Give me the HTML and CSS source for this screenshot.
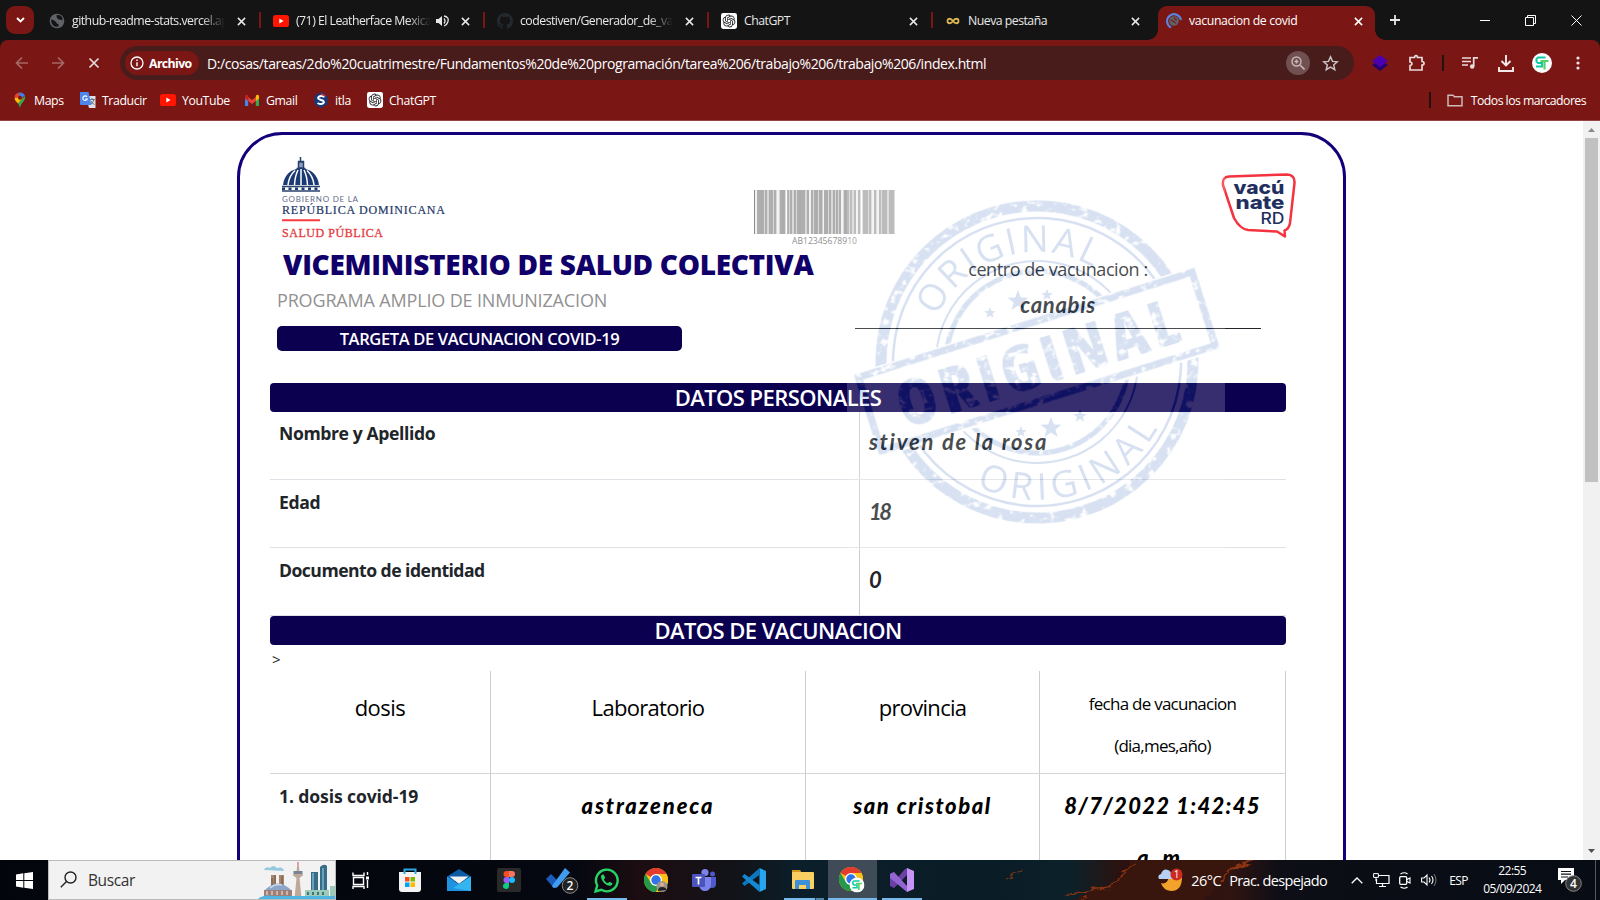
FILE: index.html
```html
<!DOCTYPE html>
<html lang="es">
<head>
<meta charset="utf-8">
<title>vacunacion de covid</title>
<link rel="stylesheet" href="styles.css">
</head>
<body>
<svg class="defs" width="0" height="0">
  <symbol id="x" viewBox="0 0 10 10"><path d="M1 1l8 8M9 1l-8 8" stroke="currentColor" stroke-width="1.7" fill="none"/></symbol>
  <symbol id="globe" viewBox="0 0 16 16"><circle cx="8" cy="8" r="7.3" fill="#5f6368"/><path d="M2 6.500c2 0 3.500 1 4.500 2s1 2.500 3 2.500v2.500c-4 1.500-7.500-2-7.500-7zM7 2.500c1.500 2 .5 3 3 4 1.500.5 2.500 0 3.500 1 .5-2.500-1-5-3.500-5.500z" fill="#141414"/></symbol>
  <symbol id="yt" viewBox="0 0 16 12"><rect width="16" height="12" rx="2.600" fill="#ff1500"/><path d="M6.300 3.500v5l4.300-2.500z" fill="#fff"/></symbol>
  <symbol id="gpt" viewBox="-3 -3 30 30"><rect x="-3" y="-3" width="30" height="30" rx="4" fill="#fff"/><path fill="#222" d="M22.2819 9.8211a5.9847 5.9847 0 0 0-.5157-4.9108 6.0462 6.0462 0 0 0-6.5098-2.9A6.0651 6.0651 0 0 0 4.9807 4.1818a5.9847 5.9847 0 0 0-3.9977 2.9 6.0462 6.0462 0 0 0 .7427 7.0966 5.98 5.98 0 0 0 .511 4.9107 6.051 6.051 0 0 0 6.5146 2.9001A5.9847 5.9847 0 0 0 13.2599 24a6.0557 6.0557 0 0 0 5.7718-4.2058 5.9894 5.9894 0 0 0 3.9977-2.9001 6.0557 6.0557 0 0 0-.7475-7.0729zm-9.022 12.6081a4.4755 4.4755 0 0 1-2.8764-1.0408l.1419-.0804 4.7783-2.7582a.7948.7948 0 0 0 .3927-.6813v-6.7369l2.02 1.1686a.071.071 0 0 1 .038.052v5.5826a4.504 4.504 0 0 1-4.4945 4.4944zm-9.6607-4.1254a4.4708 4.4708 0 0 1-.5346-3.0137l.142.0852 4.783 2.7582a.7712.7712 0 0 0 .7806 0l5.8428-3.3685v2.3324a.0804.0804 0 0 1-.0332.0615L9.74 19.9502a4.4992 4.4992 0 0 1-6.1408-1.6464zM2.3408 7.8956a4.485 4.485 0 0 1 2.3655-1.9728V11.6a.7664.7664 0 0 0 .3879.6765l5.8144 3.3543-2.0201 1.1685a.0757.0757 0 0 1-.071 0l-4.8303-2.7865A4.504 4.504 0 0 1 2.3408 7.872zm16.5963 3.8558L13.1038 8.364 15.1192 7.2a.0757.0757 0 0 1 .071 0l4.8303 2.7913a4.4944 4.4944 0 0 1-.6765 8.1042v-5.6772a.79.79 0 0 0-.407-.667zm2.0107-3.0231l-.142-.0852-4.7735-2.7818a.7759.7759 0 0 0-.7854 0L9.409 9.2297V6.8974a.0662.0662 0 0 1 .0284-.0615l4.8303-2.7866a4.4992 4.4992 0 0 1 6.6802 4.66zM8.3065 12.863l-2.02-1.1638a.0804.0804 0 0 1-.038-.0567V6.0742a4.4992 4.4992 0 0 1 7.3757-3.4537l-.142.0805L8.704 5.459a.7948.7948 0 0 0-.3927.6813zm1.0976-2.3654l2.602-1.4998 2.6069 1.4998v2.9994l-2.5974 1.4997-2.6067-1.4997Z"/></symbol>
  <symbol id="st" viewBox="0 0 20 20"><circle cx="10" cy="10" r="10" fill="#fff"/><path d="M13.500 4.500H6L4.500 6v2.500L6 10h4v3.500H4" fill="none" stroke="#10c9a0" stroke-width="2"/><path d="M8.500 8h8M12.500 8v8.500" fill="none" stroke="#58d06a" stroke-width="2.200"/></symbol>
  <symbol id="chrome" viewBox="0 0 24 24"><circle cx="12" cy="12" r="12" fill="#fbc116"/><path d="M12 12L1.600 6A12 12 0 0 1 22.400 6H12z" fill="#e33b2e"/><path d="M1.600 6A12 12 0 0 0 12 24l5.200-9L12 12 6.800 15z" fill="#229a4a"/><path d="M22.400 6A12 12 0 0 1 12 24l5.200-9-5.200-9z" fill="#fbc116"/><circle cx="12" cy="12" r="6" fill="#fff"/><circle cx="12" cy="12" r="4.700" fill="#2f74e8"/></symbol>
  <symbol id="star" viewBox="-10 -10 20 20"><path d="M0-10L2.500-3.200 9.500-3 4 1.300 6 8.100 0 4-6 8.100-4 1.300-9.500-3-2.500-3.200z"/></symbol>
</svg>

<div class="tabstrip">
  <div class="drop"><svg width="9" height="6" viewBox="0 0 9 6"><path d="M1 1l3.500 3.500L8 1" fill="none" stroke="#fff" stroke-width="1.900"/></svg></div>
  <div class="tab"><svg class="fav"><use href="#globe"/></svg><span class="label fade">github-readme-stats.vercel.app</span><svg class="close"><use href="#x"/></svg></div>
  <div class="tab"><svg class="fav"><use href="#yt"/></svg><span class="label fade">(71) El Leatherface Mexicano</span><svg class="snd" viewBox="0 0 13 12"><path d="M0 4h2.500L6 1v10L2.500 8H0z" fill="#e6e6e6"/><path d="M8 3.500q2 2.500 0 5M8 1q5.500 1 3.800 6Q11 10 8 11" fill="none" stroke="#e6e6e6" stroke-width="1.300"/></svg><svg class="close"><use href="#x"/></svg></div>
  <div class="tab"><svg class="fav" viewBox="0 0 16 16"><path fill="#24292f" d="M8 0C3.580 0 0 3.580 0 8c0 3.540 2.290 6.530 5.470 7.590.4.070.55-.17.55-.38v-1.490c-2.010.37-2.530-.49-2.690-.94-.09-.23-.48-.94-.82-1.130-.28-.15-.68-.52-.01-.53.63-.01 1.080.58 1.230.82.72 1.210 1.870.87 2.330.66.070-.52.28-.87.51-1.070-1.780-.2-3.640-.89-3.640-3.950 0-.87.31-1.590.82-2.150-.08-.2-.36-1.020.08-2.120 0 0 .67-.21 2.200.82a7.600 7.600 0 0 1 4 0c1.530-1.040 2.200-.82 2.200-.82.44 1.100.16 1.920.08 2.120.51.56.82 1.270.82 2.150 0 3.070-1.870 3.750-3.650 3.950.29.25.54.73.54 1.480v2.200c0 .21.15.46.55.38A8 8 0 0 0 16 8c0-4.420-3.580-8-8-8z"/></svg><span class="label fade">codestiven/Generador_de_vacunas</span><svg class="close"><use href="#x"/></svg></div>
  <div class="tab"><svg class="fav"><use href="#gpt"/></svg><span class="label">ChatGPT</span><svg class="close"><use href="#x"/></svg></div>
  <div class="tab last"><svg class="fav" viewBox="0 0 16 16"><path d="M8 8C6 5 2.500 5 2.500 8S6 11 8 8s5.500-3 5.500 0S10 11 8 8z" fill="none" stroke="#dcb650" stroke-width="1.800"/></svg><span class="label">Nueva pestaña</span><svg class="close"><use href="#x"/></svg></div>
  <div class="tab active"><svg class="fav" viewBox="0 0 16 16"><circle cx="8" cy="8" r="4.800" fill="#5f6368"/><path d="M4.500 7c2 0 2 1 3 1.500s2 .5 2 2M8 4.500c1 1 0 2 3 2.500" stroke="#7a1714" stroke-width="1.200" fill="none"/><path d="M5 14.500A7 7 0 1 1 15 7" fill="none" stroke="#5a85e0" stroke-width="2.100"/></svg><span class="label">vacunacion de covid</span><svg class="close"><use href="#x"/></svg></div>
  <svg class="plus" viewBox="0 0 12 12"><path d="M6 1v10M1 6h10" stroke="#e8e8e8" stroke-width="1.800"/></svg>
  <div class="win">
    <svg width="10" height="10"><path d="M0 5.500h10" stroke="#fff"/></svg>
    <svg width="11" height="11"><path d="M.5 2.500h8v8h-8zM2.500 2.500v-2h8v8h-2" fill="none" stroke="#fff"/></svg>
    <svg width="11" height="11"><path d="M.5.500l10 10M10.500.500l-10 10" stroke="#fff"/></svg>
  </div>
</div>

<div class="chrome">
  <div class="toolbar">
    <div class="nav">
      <svg class="dim" viewBox="0 0 14 14"><path d="M13 7H2M7 1.500L1.500 7 7 12.500" fill="none" stroke="currentColor" stroke-width="1.700"/></svg>
      <svg class="dim" viewBox="0 0 14 14"><path d="M1 7h11M7 1.500L12.500 7 7 12.500" fill="none" stroke="currentColor" stroke-width="1.700"/></svg>
      <svg viewBox="0 0 14 14"><path d="M2.500 2.500l9 9M11.500 2.500l-9 9" stroke="currentColor" stroke-width="1.700"/></svg>
    </div>
    <div class="omni">
      <div class="chip"><svg width="14" height="14"><circle cx="7" cy="7" r="6" fill="none" stroke="#fff" stroke-width="1.300"/><path d="M7 6.300v4M7 3.500v1.500" stroke="#fff" stroke-width="1.400"/></svg><span>Archivo</span></div>
      <span class="url">D:/cosas/tareas/2do%20cuatrimestre/Fundamentos%20de%20programación/tarea%206/trabajo%206/trabajo%206/index.html</span>
      <span class="zoom"><svg width="14" height="14"><circle cx="5.500" cy="5.500" r="4.500" fill="none" stroke="#c9b4b4" stroke-width="1.500"/><path d="M3.500 5.500h4M5.500 3.500v4M9 9l4.500 4.500" stroke="#c9b4b4" stroke-width="1.600"/></svg></span>
      <svg class="fs" viewBox="0 0 16 16"><path d="M8 1.800l1.900 4.200 4.500.4-3.400 3 1 4.400L8 11.500l-4 2.300 1-4.400-3.400-3 4.500-.4z" fill="none" stroke="#ccc2c2" stroke-width="1.400"/></svg>
    </div>
    <div class="ext">
      <svg width="16" height="16"><path d="M0 10l8-5 8 5-8 6z" fill="#28006e"/><path d="M0 6l8-6 8 6-8 6z" fill="#4b00b0"/></svg>
      <svg class="e2" width="18" height="18"><path d="M2 3.500h4.500c0-2.500 3-2.500 3 0H14v4c2.700 0 2.700 3.500 0 3.500v5H2v-4.500c2.500 0 2.500-3.500 0-3.500z" fill="none" stroke="#e8dcdc" stroke-width="1.700"/></svg>
      <i class="bar"></i>
      <svg class="e3" width="16" height="14"><path d="M0 2h9M0 5.500h9M0 9h6" stroke="#e8dcdc" stroke-width="1.600"/><path d="M11.700 10V1.800H16" fill="none" stroke="#e8dcdc" stroke-width="1.700"/><circle cx="10.200" cy="10.500" r="2.300" fill="#e8dcdc"/></svg>
      <svg class="e4" width="16" height="17"><path d="M8 0v10M3.500 6L8 10.500 12.500 6M1 12v4h14v-4" fill="none" stroke="#f2eaea" stroke-width="1.900"/></svg>
      <svg class="e5" width="20" height="20"><use href="#st"/></svg>
      <svg class="e6" width="4" height="14"><circle cx="2" cy="2" r="1.600" fill="#f0e4e4"/><circle cx="2" cy="7" r="1.600" fill="#f0e4e4"/><circle cx="2" cy="12" r="1.600" fill="#f0e4e4"/></svg>
    </div>
  </div>
  <div class="marks">
    <span class="mark m1"><svg viewBox="0 0 16 16"><path d="M2.500 6A5.500 5.500 0 0 1 7 .6L8 6z" fill="#e8402f"/><path d="M7 .6A5.500 5.500 0 0 1 13 4L8 6z" fill="#3c82f0"/><path d="M13 4c1.500 4-4.500 7-5 12L6 11z" fill="#34a853"/><path d="M2.500 6c.3 2.500 2 4 3.500 5.500L11 5.500z" fill="#fbbc04"/><circle cx="8" cy="5.700" r="2" fill="#7a1714"/></svg>Maps</span>
    <span class="mark m2"><svg viewBox="0 0 16 16"><path d="M6 4h9.500v12H9z" fill="#dcdfe3"/><path d="M9 7.500h6M12 6v1.500M14 7.500q-1 4-4 5M11 9q1 2.500 3.500 3.500" stroke="#6b7680" fill="none"/><path d="M0 0h8.500l3 13H1Q0 13 0 12z" fill="#4d86ee"/><path d="M7 4.800A2.300 2.300 0 1 0 7.300 7H5.200" fill="none" stroke="#fff" stroke-width="1.100"/></svg>Traducir</span>
    <span class="mark m3"><svg><use href="#yt"/></svg>YouTube</span>
    <span class="mark m4"><svg viewBox="0 0 16 16"><path d="M1 14V4l3.200 2.500V14z" fill="#4285f4"/><path d="M15 14V4l-3.200 2.500V14z" fill="#34a853"/><path d="M4.200 5L8 8l3.800-3v4L8 12 4.200 9z" fill="#ea4335"/><path d="M1 4.500Q1 2 3.300 3l.9.800V9L1 6.500z" fill="#c5221f"/><path d="M15 4.500Q15 2 12.700 3l-.9.800V9L15 6.500z" fill="#fbbc04"/></svg>Gmail</span>
    <span class="mark m5"><svg viewBox="0 0 16 16"><path d="M8 0l6.500 4v8L8 16l-6.500-4V4z" fill="#153a78"/><path d="M11.500 5Q8 3 5.800 4.800T8 8t2.200 3.200T4.500 11" fill="none" stroke="#fff" stroke-width="2"/><path d="M8 2l4.500 2.200" stroke="#e03030" stroke-width="1.500"/></svg>itla</span>
    <span class="mark m6"><svg><use href="#gpt"/></svg>ChatGPT</span>
    <span class="all"><i class="bar"></i><svg width="16" height="13"><path d="M1 1.200h5l1.500 1.600H15v9H1z" fill="none" stroke="#cdb9b9" stroke-width="1.500"/></svg>Todos los marcadores</span>
  </div>
</div>

<div class="view">
  <main class="card">
    <div class="logos">
      <svg class="gov" width="166" height="84" viewBox="0 0 166 84">
        <path d="M18.500 0v4M16 4.500h6M16.500 5v6h5V5zM14.500 11.500h9" stroke="#27406e" stroke-width="1.500" fill="#8ea0bd"/>
        <path d="M1 28C2 18 9 11.500 19 11.500S36 18 37 28z" fill="#1b3a74"/>
        <path d="M6 28q1-9 7-14.500M12.500 28Q13 19 16 13M19 28V12M25.500 28Q25 19 22 13M32 28q-1-9-7-14.500" stroke="#fff" stroke-width="1.500" fill="none"/>
        <path d="M0 29.500h38M0 34h38" stroke="#27406e" stroke-width="1.300"/><path d="M0 31.800h38" stroke="#1b3a74" stroke-width="2.600" stroke-dasharray="3 3.500"/>
        <text x="0" y="45" textLength="76" class="g1">GOBIERNO DE LA</text>
        <text x="0" y="57" textLength="163" class="g2">REPÚBLICA DOMINICANA</text>
        <path d="M0 63.300h38" stroke="#fb3a40" stroke-width="2"/>
        <text x="0" y="80" textLength="101" class="g3">SALUD PÚBLICA</text>
      </svg>
      <svg class="barcode" width="142" height="54" viewBox="0 0 142 54">
        <path d="M0 0h141v44H0z" fill="#d9d9d9"/>
        <path d="M.5 0v44M4 0v44M6 0v44M9 0v44M12 0v44M16 0v44M18 0v44M21 0v44M27 0v44M30 0v44M34 0v44M37 0v44M41 0v44M44 0v44M48 0v44M50 0v44M54 0v44M58 0v44M61 0v44M63 0v44M66 0v44M71 0v44M73 0v44M76 0v44M80 0v44M83 0v44M86 0v44M91 0v44M94 0v44M97 0v44M101 0v44M105 0v44M110 0v44M113 0v44M116 0v44M121 0v44M126 0v44M129 0v44M132 0v44M136 0v44M139 0v44" stroke="#8c8c8c" stroke-width="1.100"/>
        <path d="M2 0v44M24 0v44M32.500 0v44M56 0v44M69 0v44M88 0v44M103 0v44M107.500 0v44M119 0v44M124 0v44" stroke="#fff" stroke-width="1.300"/>
        <path d="M7.500 0v44M29 0v44M46 0v44M62 0v44M67.500 0v44M92 0v44M111.500 0v44M130 0v44M138 0v44" stroke="#acacac" stroke-width="2"/>
        <text x="38" y="53.500" textLength="65" lengthAdjust="spacingAndGlyphs" class="bc">AB12345678910</text>
      </svg>
      <svg class="vac" width="76" height="68" viewBox="0 0 76 68">
        <path d="M8 4.500L66 2.500Q74 3 73.500 11L69 51Q68 57 63.500 58.500L64 64.500 56 59.500 27 58Q19 57 13 46L2 13Q1 5 8 4.500z" fill="#fff" stroke="#f5333f" stroke-width="2.500" stroke-linejoin="round"/>
        <text x="12.500" y="21.500" textLength="51" lengthAdjust="spacingAndGlyphs" class="v1">vacú</text>
        <text x="14.500" y="37" textLength="49" lengthAdjust="spacingAndGlyphs" class="v1">nate</text>
        <text x="39.500" y="52" textLength="24" lengthAdjust="spacingAndGlyphs" class="v2">RD</text>
      </svg>
    </div>
    <div class="head">
      <div class="titles">
        <h1>VICEMINISTERIO DE SALUD COLECTIVA</h1>
        <p class="prog">PROGRAMA AMPLIO DE INMUNIZACION</p>
        <p class="badge"><span>TARGETA DE VACUNACION COVID-19</span></p>
      </div>
      <div class="centro"><p class="ct">centro de vacunacion :</p><p class="hand cn">canabis</p></div>
    </div>
    <h2 class="s1"><span>DATOS PERSONALES</span></h2>
    <div class="row"><b class="l1">Nombre y Apellido</b><span class="hand h1">stiven de la rosa</span></div>
    <div class="row"><b class="l2">Edad</b><span class="hand h2">18</span></div>
    <div class="row"><b class="l3">Documento de identidad</b><span class="hand h2">0</span></div>
    <h2 class="s2"><span>DATOS DE VACUNACION</span></h2>
    <div class="gt">&gt;</div>
    <div class="grid thead"><div class="c1">dosis</div><div>Laboratorio</div><div>provincia</div><div class="small">fecha de vacunacion<br><span>(dia,mes,año)</span></div></div>
    <div class="grid body"><div class="lab"><b>1. dosis covid-19</b></div><div class="hand k1">astrazeneca</div><div class="hand k2">san cristobal</div><div class="hand k3">8/7/2022 1:42:45<br>a. m.</div></div>

    <svg class="stamp" width="378" height="378" viewBox="847 173 378 378">
      <defs>
        <filter id="rough" x="-5%" y="-5%" width="110%" height="110%"><feTurbulence type="fractalNoise" baseFrequency=".12 .16" numOctaves="3" seed="4" result="n"/><feColorMatrix in="n" values="0 0 0 0 0  0 0 0 0 0  0 0 0 0 0  0 0 0 -5 3.700" result="m"/><feComposite in="SourceGraphic" in2="m" operator="in" result="r"/><feGaussianBlur in="r" stdDeviation=".5"/></filter>
        <path id="arcTop" d="M927 361a110 110 0 0 1 220 0"/><path id="arcBot" d="M899 361a138 138 0 0 0 276 0"/>
      </defs>
      <rect x="847" y="173" width="378" height="378" fill="#fff"/>
      <g transform="translate(0 1) rotate(-17.500 1037 361)">
        <g fill="none" stroke="#275eb7" filter="url(#rough)"><circle cx="1037" cy="361" r="156" stroke-width="11"/><circle cx="1037" cy="361" r="91" stroke-width="5"/></g>
        <g fill="none" stroke="#275eb7"><circle cx="1037" cy="361" r="144" stroke-width="2.500"/><circle cx="1037" cy="361" r="101" stroke-width="2"/></g>
        <g fill="#275eb7" class="ring"><text text-anchor="middle" textLength="185"><textPath href="#arcTop" startOffset="50%">ORIGINAL</textPath></text><text text-anchor="middle" textLength="210"><textPath href="#arcBot" startOffset="50%">ORIGINAL</textPath></text></g>
        <rect x="856" y="317" width="362" height="88" fill="#fff"/>
        <rect x="862" y="322" width="350" height="77" fill="none" stroke="#275eb7" stroke-width="7" filter="url(#rough)"/>
        <text x="891" y="385" textLength="292" lengthAdjust="spacing" class="big" fill="#275eb7" filter="url(#rough)">ORIGINAL</text>
      </g>
      <g fill="#275eb7"><use href="#star" x="984" y="307" width="12" height="12"/><use href="#star" x="1007" y="290" width="22" height="22"/><use href="#star" x="1041" y="289" width="12" height="12"/><use href="#star" x="1015" y="426" width="12" height="12"/><use href="#star" x="1040" y="417" width="22" height="22"/><use href="#star" x="1073" y="409" width="14" height="14"/></g>
    </svg>
  </main>
  <div class="scroll"><svg width="7" height="4"><path d="M0 4L3.500 0 7 4z" fill="#8a8a8a"/></svg><i></i><svg width="7" height="4"><path d="M0 0h7L3.500 4z" fill="#505050"/></svg></div>
</div>

<footer class="task">
  <svg class="wall" width="1600" height="40" preserveAspectRatio="none" viewBox="0 0 1600 40">
    <defs><linearGradient id="bg"><stop offset="0" stop-color="#02050b"/><stop offset=".36" stop-color="#050810"/><stop offset=".4" stop-color="#1c0d11"/><stop offset=".46" stop-color="#111318"/><stop offset=".5" stop-color="#0b1f2a"/><stop offset=".62" stop-color="#0a1c26"/><stop offset=".67" stop-color="#0c2129"/><stop offset=".7" stop-color="#2b1210"/><stop offset=".77" stop-color="#2f1411"/><stop offset=".8" stop-color="#0d0e16"/><stop offset="1" stop-color="#070c15"/></linearGradient>
    <filter id="fire" x="-5%" y="-50%" width="110%" height="200%"><feTurbulence type="fractalNoise" baseFrequency=".05 .12" numOctaves="4" seed="9" result="n"/><feDisplacementMap in="SourceGraphic" in2="n" scale="12" xChannelSelector="R" yChannelSelector="G"/><feGaussianBlur stdDeviation=".6"/></filter></defs>
    <rect width="1600" height="40" fill="url(#bg)"/>
    <g filter="url(#fire)"><path d="M1068 44l20-12 22-5 14-12 10-19h120l-32 22-20 26z" fill="#39150f"/><path d="M1064 38l18-6 26-5 16-12 12-13M1078 42l8-6M1220 20l12-10 22-10M1232 12l12-7" fill="none" stroke="#8c3412" stroke-width="1.400"/><path d="M1006 20l8-6 8-4" fill="none" stroke="#6a3418" stroke-width="1.400"/></g>
  </svg>
  <div class="start"><svg width="17" height="17" viewBox="0 0 17 17"><path d="M0 2.400L7.300 1.300v6.800H0zM8.300 1.200L17 0v8.100H8.300zM0 9h7.300v6.700L0 14.600zM8.300 9H17v8l-8.700-1.200z" fill="#fff"/></svg></div>
  <div class="search"><svg class="mag" width="17" height="17"><circle cx="10.500" cy="6.500" r="5.500" fill="none" stroke="#222" stroke-width="1.400"/><path d="M6.500 10.500L.8 16.200" stroke="#222" stroke-width="1.400"/></svg><span>Buscar</span>
    <svg class="city" width="77" height="38" viewBox="0 0 77 38"><path d="M6 9q1-4 6-2 3-4 7 0 6-2 7 3z" fill="#98c8de"/><path d="M13 14h5v20h-5zM21 14h5v20h-5z" fill="#a9876a"/><path d="M14 17v14M17 14v18M24 15v18" stroke="#6c5548"/><path d="M53 11h7v25h-7zM62 6q4-4 7-1v31h-7z" fill="#356d88"/><path d="M55 12v20M65 7v25" stroke="#7fb3c6" stroke-width="1.500"/><path d="M40 1v8" stroke="#c55" stroke-width="1"/><path d="M39 6h2l.5 5 4 3-4 3 2 20h-7l2-20-4-3 4-3z" fill="#bda899"/><path d="M35.500 10h9v3h-9z" fill="#7a8295"/><path d="M6 30q14-15 28 0z" fill="#8ba6c9"/><path d="M12 27q6-5 12-3" stroke="#c9d9ec" fill="none" stroke-width="1.500"/><path d="M6 29h28v6H6z" fill="#a07e78"/><path d="M9 30v4M14 30v4M19 30v4M24 30v4M29 30v4" stroke="#dacabd" stroke-width="1.500"/><path d="M47 29h24v7H47zM72 25h5v11h-5z" fill="#9ccabb"/><path d="M50 31v3M55 31v3M60 31v3M65 31v3" stroke="#3d7874" stroke-width="2"/><path d="M0 38q4-5 18-3h59v3z" fill="#4eb4e2"/></svg>
  </div>
  <div class="apps">
    <div><svg width="17" height="17"><path d="M1 .5v3h11v-3M1.500 5.500h10v7h-10zM1 17v-2.500h11V17M15.500 0v3M15.500 8v8" fill="none" stroke="#fff" stroke-width="1.400"/><path d="M14 4.500h3v3h-3z" fill="#fff"/></svg></div>
    <div><svg width="24" height="24"><path d="M1 4h22v17q0 3-3 3H4q-3 0-3-3z" fill="#f3f3f3"/><path d="M6.500 6V1.500h11V6" fill="none" stroke="#2ba7e0" stroke-width="2"/><path d="M7 9h4.500v4.500H7z" fill="#f25022"/><path d="M12.500 9H17v4.500h-4.500z" fill="#7fba00"/><path d="M7 14.500h4.500V19H7z" fill="#00a4ef"/><path d="M12.500 14.500H17V19h-4.500z" fill="#ffb900"/></svg></div>
    <div><svg class="nudge" width="24" height="24"><path d="M0 8.500L12 1l12 7.500V13H0z" fill="#0c59a4"/><path d="M2.500 8.500h19L12 16z" fill="#f2f2f2"/><path d="M0 8.500l12 7.500 12-7.500V23H0z" fill="#1f93e0"/><path d="M24 8.500L6 20l18 3z" fill="#35b5f0"/></svg></div>
    <div><svg class="nudge" width="24" height="24"><rect width="24" height="24" rx="2" fill="#2a2a2a"/><path d="M12 3H9.500a3 3 0 0 0 0 6H12z" fill="#f24e1e"/><path d="M12 3h3a3 3 0 0 1 0 6h-3z" fill="#ff7262"/><path d="M12 9H9.500a3 3 0 0 0 0 6H12z" fill="#a259ff"/><circle cx="15" cy="12" r="3" fill="#1abcfe"/><path d="M12 15H9.500a3 3 0 1 0 2.500 3z" fill="#0acf83"/></svg></div>
    <div><svg class="todo" width="34" height="28"><path d="M1 13l5-5 7 7-5 6z" fill="#1b5cbb"/><path d="M7 20L20 2l5 4.500L12 21.500 8.500 22z" fill="#3f9cf0"/><circle cx="25" cy="19.500" r="7.800" fill="#222" stroke="#888"/><text x="25" y="23.600" text-anchor="middle" class="num">2</text></svg></div>
    <div class="on"><svg width="25" height="25" viewBox="0 0 24 24"><path d="M1.500 22.500l1.600-5.700A10.400 10.400 0 1 1 7 20.900z" fill="none" stroke="#28d366" stroke-width="2.300"/><path d="M8.500 6.300c-1 0-2 1.200-1.700 2.700.7 3.700 4.500 7.600 8.200 8 1.700.2 2.700-1 2.700-2.300l-2.900-1.600-1.500 1.500c-1.500-.5-3.200-2.200-3.800-3.600L10.700 9.500 9.500 6.500z" fill="#28d366"/></svg></div>
    <div><svg width="24" height="24"><use href="#chrome"/><circle cx="18" cy="18.500" r="5.500" fill="#9c958c"/><path d="M14 23q0-4 4-4t4.500 3z" fill="#222"/><circle cx="18" cy="16.500" r="2" fill="#dcae94"/></svg></div>
    <div><svg width="25" height="24"><circle cx="13" cy="4.500" r="3.600" fill="#7b83eb"/><circle cx="20.500" cy="6" r="2.500" fill="#5059c9"/><path d="M17 9h7v7q0 4-4 4h-3z" fill="#5059c9"/><path d="M7 9h12v8q-1 6-6 6t-6-6z" fill="#7b83eb"/><rect y="6" width="13" height="13" rx="1" fill="#4b53bc"/><path d="M3.500 9.500h6M6.500 9.500v7" stroke="#fff" stroke-width="1.700"/></svg></div>
    <div><svg width="24" height="24"><path d="M17.500 0L24 3v18l-6.500 3z" fill="#28a4ee"/><path d="M17.500 0L0 15.500l2.500 2.500L18 6.500z" fill="#0c76bc"/><path d="M17.500 24L0 8.500 2.500 6 18 17.500z" fill="#1488d0"/></svg></div>
    <div class="on split"><svg width="24" height="20"><path d="M1 0h8l2 3H1z" fill="#d99a1c"/><rect x="1" y="2" width="22" height="17" rx="1" fill="#fbd063"/><path d="M4 19v-8q0-1 1-1h13q1 0 1 1v8h-4v-4H8v4z" fill="#3c90d8"/></svg></div>
    <div class="on cur"><svg width="26" height="26"><use href="#chrome" width="24" height="24"/><use href="#st" x="10.500" y="10.500" width="15" height="15"/></svg></div>
    <div class="on"><svg width="24" height="24"><path d="M0 6v12l4 2L18 6V0L15 1 4 14V4z" fill="#6b3fa3"/><path d="M0 6l4-2 13 14v6L0 10z" fill="#9465d2"/><path d="M17 0l7 3v18l-7 3z" fill="#c594f5"/></svg></div>
  </div>
  <div class="tray">
    <svg class="wx" width="25" height="24"><path d="M11 9q8 3 13 0 0 14-11 14Q5 22 3 15q6 2 8-6z" fill="#f3a32c"/><path d="M1 11q-2-4 2-5 2-6 7-4 3 1 3 4 4 0 3 5z" fill="#b7cff2"/><circle cx="18.500" cy="6.500" r="6" fill="#cc2b22"/><text x="18.500" y="10.200" text-anchor="middle" class="one">1</text></svg>
    <span class="temp">26°C</span><span class="cond">Prac. despejado</span>
    <svg class="i1" width="12" height="7"><path d="M.7 6.300L6 1l5.300 5.300" fill="none" stroke="#fff" stroke-width="1.300"/></svg>
    <svg class="i2" width="17" height="14"><path d="M5 2.500h11v8H3.500V6M9.500 10.500v3M6 13.500h7" fill="none" stroke="#fff" stroke-width="1.200"/><path d="M.6.600h4.800v3.800H.6zM3 4v4" fill="none" stroke="#fff"/></svg>
    <svg class="i3" width="12" height="17"><rect x=".7" y="4.700" width="7" height="7.600" rx="1" fill="none" stroke="#fff" stroke-width="1.300"/><path d="M8 7.500L11 6v5L8 9.500M1.500 2q4-2.500 7 0M1.500 15q4 2.500 7 0" fill="none" stroke="#fff" stroke-width="1.100"/></svg>
    <svg class="i4" width="17" height="14"><path d="M.6 5h2.500L6 2v10L3.100 9H.6zM8 4.500q2 2.500 0 5M10.500 3q3 4 0 8" fill="none" stroke="#fff" stroke-width="1.100"/><path d="M13 1q4 6 0 12" fill="none" stroke="#777"/></svg>
    <span class="esp">ESP</span>
    <div class="clock"><span>22:55</span><span>05/09/2024</span></div>
    <svg class="notif" width="26" height="26"><path d="M1 1h16v12H8l-4 4v-4H1z" fill="#fff"/><path d="M4 4.500h10M4 7.200h10M4 10h7" stroke="#10131a" stroke-width="1.200"/><circle cx="16.500" cy="16.500" r="7.800" fill="#333" stroke="#888"/><text x="16.500" y="20.800" text-anchor="middle" class="num">4</text></svg>
  </div>
</footer>
</body>
</html>
```
FILE: styles.css
```css
* { box-sizing: border-box; margin: 0; padding: 0; }
body { width: 1600px; height: 900px; overflow: hidden; display: flex; flex-direction: column; background: #141414; font-family: "Open Sans", "Noto Sans", sans-serif; color: #212529; }
svg { display: block; flex: none; }
span, p, h1, h2, b { white-space: nowrap; }
.defs { position: absolute; }

/* tab strip */
.tabstrip { height: 40px; flex: none; background: #141414; display: flex; align-items: flex-end; color: #e8e8e8; }
.drop { width: 28px; height: 28px; margin: 0 3px 6px 6px; border-radius: 9px; background: #7a1714; display: flex; align-items: center; justify-content: center; }
.tab { width: 224px; flex: none; height: 34px; padding: 0 14px 0 12px; display: flex; align-items: center; position: relative; }
.tab:not(.last):not(.active)::after { content: ""; position: absolute; right: 0; top: 6px; width: 2px; height: 16px; background: #7a1714; }
.fav { width: 16px; height: 16px; margin: -5px 7px 0 0; }
.label { flex: 1; font-size: 12.3px; letter-spacing: -.52px; line-height: 18px; margin-top: -4px; overflow: hidden; min-width: 0; }
.fade { -webkit-mask-image: linear-gradient(90deg, #000 calc(100% - 24px), transparent); mask-image: linear-gradient(90deg, #000 calc(100% - 24px), transparent); }
.close { width: 9px; height: 9px; margin: -4px 1px 0 12px; }
.snd { width: 13px; height: 12px; margin: -5px 0 0 5px; }
.tab.last { padding-right: 16px; }
.tab.active { width: 217px; margin-left: 1px; padding: 0 11px 0 8px; background: #7a1714; color: #fff; border-radius: 9px 9px 0 0; margin-right: 14px; }
.tab.active .label { letter-spacing: -.38px; }
.tab.active::before, .tab.active::after { content: ""; position: absolute; bottom: 0; width: 10px; height: 10px; }
.tab.active::before { left: -10px; background: radial-gradient(circle at 0 0, transparent 9.5px, #7a1714 10px); }
.tab.active::after { right: -10px; background: radial-gradient(circle at 100% 0, transparent 9.5px, #7a1714 10px); }
.plus { width: 12px; height: 12px; margin-bottom: 14px; }
.win { margin: 0 18px 14px auto; display: flex; gap: 35px; }

/* toolbar and bookmarks */
.chrome { height: 81px; flex: none; background: #7a1714; border-bottom: 1px solid #964545; border-radius: 8px 8px 0 0; color: #fff; }
.toolbar { height: 46px; padding-top: 6px; display: flex; }
.nav { width: 120px; height: 34px; padding-left: 15px; display: flex; align-items: center; gap: 22px; color: #e8dcdc; }
.nav svg { width: 14px; height: 14px; }
.nav .dim { color: #a56866; }
.omni { width: 1234px; height: 34px; border-radius: 17px; background: #491c1c; display: flex; align-items: center; padding: 0 15px 0 5px; }
.chip { width: 74px; height: 24px; border-radius: 12px; background: #7a1714; display: flex; align-items: center; gap: 5px; padding-left: 5px; font-size: 12.3px; font-weight: 700; letter-spacing: -.6px; }
.url { margin-left: 8px; font-size: 14px; letter-spacing: -.42px; }
.zoom { margin-left: auto; width: 24px; height: 24px; border-radius: 50%; background: #705050; display: flex; align-items: center; justify-content: center; margin-right: 12px; }
.fs { width: 17px; height: 17px; }
.ext { height: 34px; flex: 1; display: flex; align-items: center; padding-left: 18px; }
.e2 { margin: 0 16px 0 20px; }
.e3 { margin: 0 20px 0 18px; }
.e5 { margin: 0 24px 0 18px; }
.bar { width: 2px; height: 16px; background: #251010; }
.marks { height: 28px; display: flex; align-items: center; font-size: 12.3px; padding-left: 12px; letter-spacing: -.4px; }
.mark { display: flex; align-items: center; gap: 6px; }
.mark svg { width: 16px; height: 16px; }
.m1 { width: 68px; } .m2 { width: 80px; } .m3 { width: 84px; } .m4 { width: 69px; } .m5 { width: 54px; }
.all { margin-left: auto; padding-right: 14px; display: flex; align-items: center; gap: 8px; letter-spacing: -.56px; }
.all .bar { margin-right: 8px; }

/* page */
.view { height: 739px; flex: none; overflow: hidden; display: flex; padding: 11px 0 0 237px; background: #fff; }
.card { width: 1109px; height: 900px; flex: none; border: 3px solid #12007a; border-radius: 45px; padding: 0 57px 0 30px; }
.logos { height: 111px; display: flex; }
.gov { margin: 22px 0 0 12px; }
.barcode { margin: 55px 0 0 306px; }
.vac { margin: 37px 0 0 325px; }
.g1 { font: 8px Lato, sans-serif; fill: #5f6c8a; }
.g2 { font: 12px "Liberation Serif", serif; fill: #1d3768; stroke: #1d3768; stroke-width: .2px; }
.g3 { font: 12px "Liberation Serif", serif; fill: #e63a40; stroke: #e63a40; stroke-width: .3px; }
.bc { font: 9px "Open Sans", sans-serif; fill: #909090; }
.v1 { font: 800 18.500px Inter, sans-serif; fill: #1f2f60; }
.v2 { font: 500 16px Inter, sans-serif; fill: #1f2f60; }
.head { height: 137px; display: flex; }
.titles { width: 585px; padding-left: 7px; }
h1 { font-size: 28px; line-height: 36px; font-weight: 800; color: #11006a; margin-left: 6px; letter-spacing: -.3px; }
.prog { margin-top: 6px; font-size: 18px; line-height: 24px; color: #919191; letter-spacing: -.16px; }
.badge { margin-top: 14px; width: 405px; height: 25px; line-height: 25px; border-radius: 5px; background: #0b004f; color: #fff; text-align: center; font-size: 16.500px; font-weight: 600; letter-spacing: -.36px; }
.centro { width: 406px; height: 83px; border-bottom: 1px solid #212529; text-align: center; padding-top: 11px; }
.ct { font-size: 18px; line-height: 24px; letter-spacing: -.43px; }
.hand { font-family: Lato, "Open Sans", cursive; font-style: italic; font-weight: 700; font-size: 22px; line-height: 30px; }
.cn { margin-top: 9px; letter-spacing: .7px; }
h2 { height: 29px; line-height: 29px; background: #0b004f; color: #fff; border-radius: 4px; text-align: center; font-size: 22px; font-weight: 600; width: 1016px; letter-spacing: -.56px; }
.row { height: 68px; width: 1016px; display: flex; border-bottom: 1px solid #dee2e6; }
.row b { width: 590px; border-right: 1px solid #c9cbd0; padding: 9px 0 0 9px; font-size: 17.600px; line-height: 24px; font-weight: 700; letter-spacing: -.4px; }
.row .l2 { padding-top: 10px; }
.row .l3 { padding-top: 10px; letter-spacing: -.53px; }
.row .hand { padding: 15px 0 0 9px; }
.row .h1 { letter-spacing: 1.8px; }
.row .h2 { padding-top: 17px; letter-spacing: -2.500px; }
.gt { height: 26px; padding-left: 2px; line-height: 28px; font-size: 15px; }
.grid { display: grid; grid-template-columns: 221px 315px 234px 246px; width: 1016px; color: #000; text-align: center; }
.grid > div { border-right: 1px solid #cdcdcd; }
.thead { height: 103px; border-bottom: 1px solid #d5d5d5; font-size: 22px; line-height: 73px; letter-spacing: -.7px; }
.thead .c1 { letter-spacing: -.5px; }
.thead .small { font-size: 17px; line-height: 42px; padding-top: 12px; letter-spacing: -.75px; }
.body { height: 120px; }
.body .lab { text-align: left; padding: 10px 0 0 9px; font-size: 17.600px; line-height: 24px; color: #212529; letter-spacing: -.12px; }
.body .hand { line-height: 52px; padding-top: 6px; font-weight: 900; }
.k1 { letter-spacing: 1.900px; }
.k2 { letter-spacing: 1.600px; }
.k3 { letter-spacing: 1.300px; }
.stamp { position: absolute; left: 847px; top: 173px; opacity: .18; }
.ring { font: 500 37px "Open Sans", sans-serif; }
.big { font: 800 64px "Open Sans", sans-serif; font-stretch: 75%; }
.scroll { margin: -11px 0 0 auto; width: 17px; height: 739px; background: #f1f1f1; display: flex; flex-direction: column; align-items: center; padding: 7px 0; }
.scroll i { width: 13px; height: 344px; background: #c1c1c1; margin: 6px 0 auto; }

/* taskbar */
.task { height: 40px; flex: none; display: flex; position: relative; color: #fff; }
.wall { position: absolute; left: 0; top: 0; }
.task > div { position: relative; }
.start { width: 48px; display: flex; align-items: center; justify-content: center; }
.search { width: 288px; background: #f2f2f2; border: 1px solid #bbb; display: flex; align-items: center; color: #333; font-size: 15.500px; letter-spacing: -.4px; }
.mag { margin: 0 11px 2px; }
.city { margin-left: auto; }
.apps { display: flex; }
.apps > div { width: 49.200px; height: 40px; display: flex; align-items: center; justify-content: center; position: relative; }
.nudge { margin-left: 1px; }
.todo { margin-left: 9px; }
.apps .on::after { content: ""; position: absolute; left: 5px; right: 4px; bottom: 0; height: 2px; background: #76b9ed; }
.apps .split::after { background: linear-gradient(90deg, #76b9ed 31px, #22465c 31px 32px, #5484a8 32px); }
.apps .cur { background: #3f4c57; }
.apps .cur::after { left: 0; right: 0; }
.num { font: 600 12px "Open Sans", sans-serif; fill: #fff; }
.one { font: 10px "Open Sans", sans-serif; fill: #fff; }
.tray { flex: 1; display: flex; align-items: center; padding-left: 232px; border-right: 1px solid #54585f; margin-right: 4px; }
.temp { margin-left: 8px; width: 38px; font-size: 14.500px; letter-spacing: -.5px; }
.cond { width: 122px; font-size: 14.500px; letter-spacing: -.65px; }
.i2 { margin-left: 10px; } .i3 { margin-left: 9px; } .i4 { margin-left: 10px; }
.esp { margin-left: 11px; width: 32px; font-size: 12px; letter-spacing: -.6px; }
.clock { width: 62px; display: flex; flex-direction: column; align-items: center; font-size: 12px; line-height: 18px; letter-spacing: -.55px; }
.notif { margin-left: 14px; }
```
